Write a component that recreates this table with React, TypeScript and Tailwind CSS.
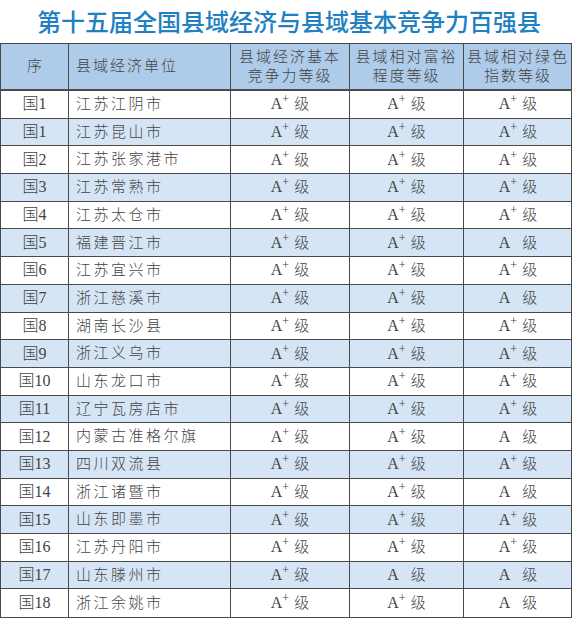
const rows: [string, string, boolean, boolean, boolean][] = [
  ["国1", "江苏江阴市", true, true, true],
  ["国1", "江苏昆山市", true, true, true],
  ["国2", "江苏张家港市", true, true, true],
  ["国3", "江苏常熟市", true, true, true],
  ["国4", "江苏太仓市", true, true, true],
  ["国5", "福建晋江市", true, true, false],
  ["国6", "江苏宜兴市", true, true, true],
  ["国7", "浙江慈溪市", true, true, false],
  ["国8", "湖南长沙县", true, true, true],
  ["国9", "浙江义乌市", true, true, true],
  ["国10", "山东龙口市", true, true, true],
  ["国11", "辽宁瓦房店市", true, true, true],
  ["国12", "内蒙古准格尔旗", true, true, false],
  ["国13", "四川双流县", true, true, true],
  ["国14", "浙江诸暨市", true, true, false],
  ["国15", "山东即墨市", true, true, true],
  ["国16", "江苏丹阳市", true, true, true],
  ["国17", "山东滕州市", true, false, false],
  ["国18", "浙江余姚市", true, true, false],
];

function Grade({ plus }: { plus: boolean }) {
  return (
    <span className="inline-flex items-baseline">
      <span className="text-[16px]">A</span>
      <span className="inline-block w-[12px] text-left text-[12px] relative -top-[6px]">
        {plus ? "+" : ""}
      </span>
      <span>级</span>
    </span>
  );
}

const cols = "grid grid-cols-[68px_162px_119px_114px_108px]";

export default function App() {
  return (
    <div
      className="w-[573px] h-[619px] bg-white overflow-hidden"
      style={{ fontFamily: '"Liberation Serif", "Noto Sans CJK SC", serif' }}
    >
      <h1
        className="h-[43px] pt-[7px] pl-[37px] text-[24px] leading-[28px] font-medium text-[#2180c2]"
        style={{ fontFamily: '"Noto Sans CJK SC", sans-serif' }}
      >
        第十五届全国县域经济与县域基本竞争力百强县
      </h1>
      <div className="w-[572px] border border-[#4a4a4a] text-[#444444] text-[15px] font-light">
        <div className={`${cols} h-[47px] bg-[#aecbe9] border-b-2 border-[#4a4a4a] leading-[19px]`}>
          <div className="flex items-center justify-center border-r border-[#4a4a4a]">序</div>
          <div className="flex items-center pl-[7px] tracking-[2px] border-r border-[#4a4a4a]">县域经济单位</div>
          <div className="flex items-center justify-center text-center tracking-[2px] border-r border-[#4a4a4a]">
            县域经济基本<br />竞争力等级
          </div>
          <div className="flex items-center justify-center text-center tracking-[2px] border-r border-[#4a4a4a]">
            县域相对富裕<br />程度等级
          </div>
          <div className="flex items-center justify-center text-center tracking-[2px]">
            县域相对绿色<br />指数等级
          </div>
        </div>
        {rows.map(([no, name, a, b, c], i) => (
          <div
            key={i}
            className={`${cols} h-[27.7px] ${i % 2 === 1 ? "bg-[#d5e5f5]" : "bg-white"} ${
              i < rows.length - 1 ? "border-b border-[#4a4a4a]" : ""
            }`}
          >
            <div className="flex items-center justify-center border-r border-[#4a4a4a] text-[16px]">{no}</div>
            <div className="flex items-center pl-[7px] tracking-[2.5px] border-r border-[#4a4a4a]">{name}</div>
            <div className="flex items-center justify-center border-r border-[#4a4a4a]">
              <Grade plus={a} />
            </div>
            <div className="flex items-center justify-center border-r border-[#4a4a4a]">
              <Grade plus={b} />
            </div>
            <div className="flex items-center justify-center">
              <Grade plus={c} />
            </div>
          </div>
        ))}
      </div>
    </div>
  );
}
